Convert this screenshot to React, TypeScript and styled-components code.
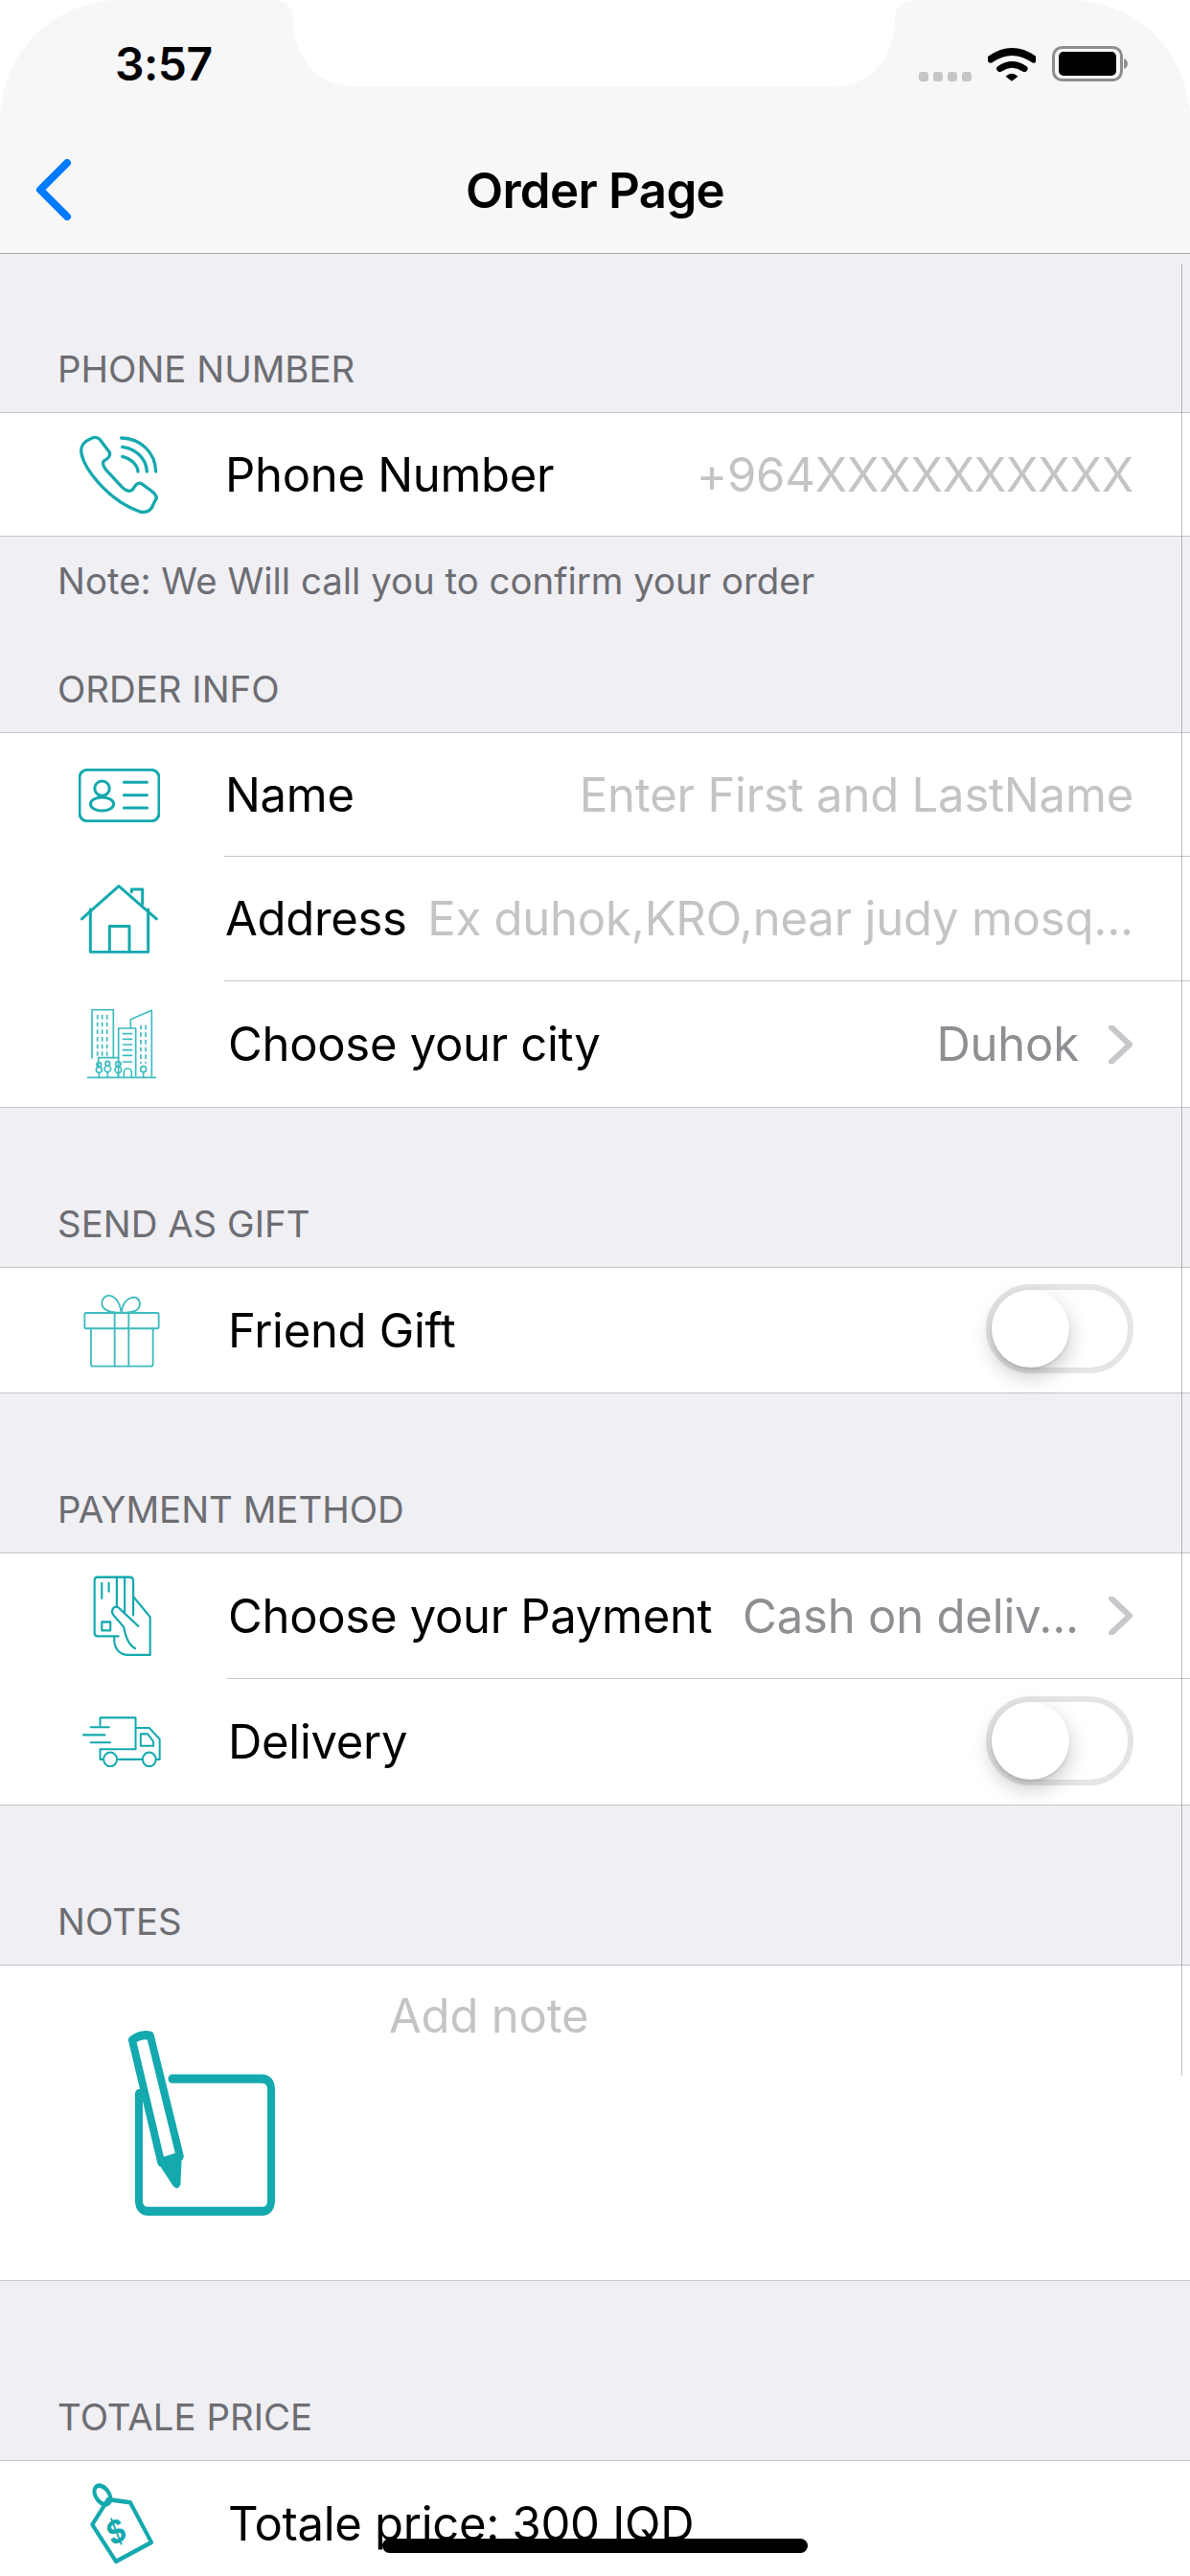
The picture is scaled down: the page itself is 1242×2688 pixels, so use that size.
import React from 'react'
import styled, { createGlobalStyle } from 'styled-components'

const TEAL = '#14a9ae'
const TEAL_LIGHT = '#3dbbbf'

const GlobalStyle = createGlobalStyle`
  html, body {
    margin: 0;
    padding: 0;
    background: #fff;
    font-family: Inter, "Noto Sans", "Liberation Sans", sans-serif;
  }
`

const Screen = styled.div`
  position: relative;
  width: 1242px;
  height: 2688px;
  overflow: hidden;
  background: #fff;
  display: flex;
  flex-direction: column;
`

const Nav = styled.header`
  position: relative;
  height: 265px;
  flex-shrink: 0;
  box-sizing: border-box;
  background: #f7f7f8;
  border-bottom: 1px solid #a9a9ab;
  border-radius: 125px 125px 0 0;
`

const NotchShape = styled.svg`
  position: absolute;
  left: 280px;
  top: 0;
`

const StatusBar = styled.div`
  height: 132px;
  box-sizing: border-box;
  padding: 49px 65px 0 120px;
  display: flex;
  justify-content: space-between;
  align-items: flex-start;
`

const Time = styled.span`
  font-size: 48px;
  line-height: 36px;
  font-weight: 600;
  color: #000;
  letter-spacing: -0.5px;
`

const StatusIcons = styled.div`
  display: flex;
  align-items: flex-end;
  height: 36px;
`

const SignalDots = styled.div`
  display: flex;
  gap: 5px;
  margin-right: 17px;
`

const SignalDot = styled.i`
  display: block;
  width: 10px;
  height: 10px;
  border-radius: 3px;
  background: #c6c6c6;
`

const TitleBar = styled.div`
  height: 132px;
  display: grid;
  grid-template-columns: 1fr auto 1fr;
  align-items: center;
`

const BackButton = styled.div`
  margin-left: 36px;
`

const Title = styled.h1`
  margin: 0;
  font-size: 51px;
  font-weight: 600;
  color: #000;
  letter-spacing: -0.7px;
`

const Content = styled.main`
  flex: 1;
  background: #efeff4;
`

const SectionHeader = styled.div<{ $height: number }>`
  height: ${p => p.$height}px;
  box-sizing: border-box;
  padding: 0 0 21px 60px;
  display: flex;
  align-items: flex-end;
  font-size: 38.4px;
  line-height: 47px;
  color: #6d6d72;
`

const SectionNote = styled.div`
  height: 92px;
  box-sizing: border-box;
  padding-left: 60px;
  display: flex;
  align-items: center;
  font-size: 38.4px;
  color: #6d6d72;
`

const Group = styled.section`
  background: #fff;
  border-top: 1px solid #c6c6c8;
  border-bottom: 1px solid #c6c6c8;
`

const Row = styled.div<{ $height: number; $inset: number }>`
  height: ${p => p.$height}px;
  display: grid;
  grid-template-columns: ${p => p.$inset}px 1fr;
  --icon-pad: ${p => p.$inset - 220}px;
`

const IconCell = styled.div`
  padding-left: var(--icon-pad);
  display: flex;
  align-items: center;
  justify-content: center;
`

const RowBody = styled.div<{ $divider?: boolean }>`
  min-width: 0;
  box-sizing: border-box;
  padding: 0 59px 0 1px;
  display: flex;
  align-items: center;
  justify-content: space-between;
  border-bottom: ${p => (p.$divider ? '1px solid #c6c6c8' : 'none')};
`

const RowLabel = styled.span`
  font-size: 49px;
  color: #000;
  white-space: nowrap;
  letter-spacing: -0.3px;
`

const Placeholder = styled.span`
  font-size: 49px;
  color: #c4c4c6;
  white-space: nowrap;
  letter-spacing: -0.2px;
`

const ValueWrap = styled.span`
  display: flex;
  align-items: center;
  gap: 31px;
`

const Value = styled.span`
  font-size: 49px;
  color: #8e8e93;
  white-space: nowrap;
  letter-spacing: -0.2px;
`

const ToggleTrack = styled.div`
  width: 154px;
  height: 93px;
  box-sizing: border-box;
  margin-bottom: 3px;
  border: 6px solid #e5e5e5;
  border-radius: 47px;
  background: #fff;
`

const ToggleKnob = styled.div`
  width: 81px;
  height: 81px;
  border-radius: 50%;
  background: #fff;
  box-shadow: 0 9px 22px rgba(0, 0, 0, 0.22), 0 2px 3px rgba(0, 0, 0, 0.1);
`

const NotesRow = styled.div`
  height: 328px;
  display: grid;
  grid-template-columns: 406px 1fr;
`

const NotesIconCell = styled.div`
  padding-left: 133px;
  display: flex;
  align-items: center;
`

const NotesField = styled.div`
  padding-top: 23px;
  line-height: 60px;
`

const ScrollIndicator = styled.div`
  position: absolute;
  left: 1233px;
  top: 275px;
  width: 1px;
  height: 1891px;
  background: rgba(60, 60, 67, 0.32);
`

const HomeBar = styled.div`
  position: absolute;
  left: 399px;
  top: 2649px;
  width: 444px;
  height: 15px;
  border-radius: 8px;
  background: #000;
`

const Line = styled.svg.attrs({ fill: 'none', strokeLinecap: 'round', strokeLinejoin: 'round', preserveAspectRatio: 'none' })`
  display: block;
`

const WifiGlyph = styled(Line)`
  margin-right: 17px;
`

const SoftLine = styled(Line)`
  filter: blur(0.7px);
`

const Back = () => (
  <Line width={40} height={64} viewBox="0 0 40 64" stroke="#007aff" strokeWidth={8}>
    <path d="M34 4 L6 32 L34 60" />
  </Line>
)

const Chevron = () => (
  <Line width={26} height={40} viewBox="0 0 26 40" stroke="#c7c7cc" strokeWidth={6} strokeLinecap="butt" strokeLinejoin="miter">
    <path d="M3 2 L22 20 L3 38" />
  </Line>
)

const Wifi = () => (
  <WifiGlyph width={50} height={36} viewBox="305 148 148 108" stroke="#000" strokeLinecap="butt">
    <path d="M314 186 Q380 140 446 186" strokeWidth={23} />
    <path d="M342 216 Q380 190 418 216" strokeWidth={20} />
    <path d="M360 240 Q379 222 398 240 L379 255 Z" fill="#000" stroke="none" />
  </WifiGlyph>
)

const Battery = () => (
  <Line width={79} height={37} viewBox="0 0 79 37">
    <rect x={1.5} y={1.5} width={71} height={34} rx={9} stroke="#8e8e8e" strokeWidth={3} />
    <rect x={7} y={6} width={60} height={25} rx={5} fill="#000" />
    <path d="M75 13 Q79 15 79 18.5 Q79 22 75 24 Z" fill="#8e8e8e" />
  </Line>
)

const PhoneIcon = () => (
  <Line width={86} height={86} viewBox="125 92 258 258" stroke={TEAL} strokeWidth={10}>
    <path d="M165 110 C145 118 133 135 137 155 C145 200 215 300 320 338 C340 342 355 335 362 315 L372 295 C372 285 365 280 355 272 L325 250 C315 245 305 255 298 268 C290 277 275 272 265 262 L215 208 C205 195 200 185 208 178 C220 172 228 162 225 152 L195 112 C185 102 175 104 165 110 Z" />
    <path d="M262 107 C320 108 368 150 370 212" />
    <path d="M265 135 C305 140 340 170 342 212" />
    <path d="M265 165 C290 170 312 190 314 212" />
  </Line>
)

const CardIcon = () => (
  <Line width={85} height={56} viewBox="127 62 253 168" stroke={TEAL} strokeWidth={9}>
    <rect x={130} y={66} width={247} height={160} rx={24} />
    <circle cx={200} cy={124} r={23} />
    <ellipse cx={200} cy={173} rx={36} ry={21} />
    <path d="M268 105 H340 M268 145 H340 M268 185 H340" />
  </Line>
)

const HouseIcon = () => (
  <Line width={81} height={72} viewBox="132 426 243 219" stroke={TEAL} strokeWidth={9}>
    <path d="M136 535 L252 431 L370 535" />
    <path d="M163 505 V640 H344 V505" />
    <path d="M223 640 V558 H285 V640" />
    <path d="M292 450 V441 H326 V488" />
  </Line>
)

const CityIcon = () => (
  <Line width={72} height={73} viewBox="150 820 216 219" stroke={TEAL_LIGHT} strokeWidth={5}>
    <path d="M165 972 V822 H232 V972" />
    <path d="M248 1030 V880 H302 V1030" />
    <path d="M286 880 V852 L352 824 V1030" />
    <path d="M150 1034 H365" />
    <path d="M185 1000 V972 H248" />
    <path d="M182 838 V966 M197 838 V966 M212 838 V966" strokeDasharray="14 9" strokeLinecap="butt" />
    <path d="M318 870 V990 M333 870 V990" strokeDasharray="14 9" strokeLinecap="butt" />
    <path d="M262 897 H290 M262 914 H290 M262 931 H290 M262 948 H290 M262 965 H290 M262 985 H290" />
    <circle cx={187} cy={1010} r={9} />
    <circle cx={187} cy={994} r={7} />
    <circle cx={214} cy={1007} r={10} />
    <circle cx={214} cy={990} r={7} />
    <circle cx={247} cy={1010} r={10} />
    <circle cx={247} cy={992} r={8} />
    <circle cx={326} cy={1008} r={9} />
    <path d="M187 1020 V1034 M214 1018 V1034 M247 1020 V1034 M326 1018 V1034" />
    <path d="M265 1032 V1018 A12 12 0 0 1 289 1018 V1032" />
  </Line>
)

const GiftIcon = () => (
  <Line width={80} height={78} viewBox="138 78 240 222" stroke={TEAL_LIGHT} strokeWidth={5.5}>
    <rect x={142} y={138} width={232} height={46} rx={5} />
    <path d="M162 184 V290 Q162 296 168 296 H350 Q356 296 356 290 V184" />
    <path d="M236 138 V296 M280 138 V296" />
    <path d="M257 136 C215 140 195 125 196 108 C198 78 245 72 257 136 Z" />
    <path d="M257 136 C265 85 312 80 315 110 C315 128 300 140 257 136 Z" />
  </Line>
)

const PaymentIcon = () => (
  <Line width={61} height={85} viewBox="165 903 184 240" stroke={TEAL} strokeWidth={6.5}>
    <path d="M245 1082 H180 Q170 1082 170 1072 V918 Q170 908 180 908 H280 Q292 908 292 920 V1020" />
    <path d="M240 908 V995 M265 908 V1010" />
    <path d="M193 925 V970 M215 925 V950" />
    <rect x={193} y={1040} width={27} height={25} />
    <path d="M292 965 L345 1025 V1137 H275 C250 1137 232 1120 232 1090 V1082" />
    <path d="M308 1052 L245 997 C228 990 220 1008 230 1020 L262 1055 C268 1085 280 1110 298 1118" />
  </Line>
)

const TruckIcon = () => (
  <Line width={82} height={53} viewBox="134 1318 248 150" stroke={TEAL} strokeWidth={6}>
    <path d="M190 1345 V1322 H302 V1415 H190 V1445 H200" />
    <path d="M246 1445 H322 M368 1445 H378 V1385 L345 1352 H302" />
    <circle cx={222} cy={1445} r={21} />
    <circle cx={345} cy={1445} r={21} />
    <path d="M318 1370 H340 L358 1392 V1405 H318 Z" />
    <path d="M160 1350 H218 M137 1373 H205 M160 1395 H222" />
  </Line>
)

const NoteIcon = () => (
  <SoftLine width={154} height={194} viewBox="278 90 464 500" stroke={TEAL} strokeWidth={24}>
    <path d="M418 222 H700 Q730 222 730 252 V548 Q730 578 700 578 H344 Q314 578 314 548 V262" />
    <path d="M293 118 Q320 100 350 106 L443 430 L384 446 Z" />
    <path d="M378 448 L446 428 L442 505 Q436 520 424 508 Z" fill={TEAL} strokeWidth={6} />
  </SoftLine>
)

const TagIcon = () => (
  <Line width={66} height={86} viewBox="158 1315 200 223" stroke={TEAL} strokeWidth={12}>
    <path d="M215 1362 L285 1370 L352 1478 L240 1530 L165 1430 Z" />
    <ellipse cx={197} cy={1350} rx={30} ry={20} transform="rotate(45 197 1350)" />
    <text x={0} y={0} fill={TEAL} stroke="none" fontSize={86} fontWeight={700} fontFamily="Inter, sans-serif" textAnchor="middle" transform="translate(253 1477) rotate(-25)">$</text>
  </Line>
)

const Toggle = () => (
  <ToggleTrack>
    <ToggleKnob />
  </ToggleTrack>
)

export default function App() {
  return (
    <Screen>
      <GlobalStyle />
      <Nav>
        <StatusBar>
          <Time>3:57</Time>
          <StatusIcons>
            <SignalDots>
              <SignalDot />
              <SignalDot />
              <SignalDot />
              <SignalDot />
            </SignalDots>
            <Wifi />
            <Battery />
          </StatusIcons>
        </StatusBar>
        <TitleBar>
          <BackButton><Back /></BackButton>
          <Title>Order Page</Title>
        </TitleBar>
        <NotchShape width={680} height={91} viewBox="280 0 680 91">
          <path d="M284 0 C300 0 306 8 306 24 C308 60 330 89 368 90 H872 C910 89 932 60 934 24 C934 8 940 0 956 0 Z" fill="#fff" />
        </NotchShape>
      </Nav>
      <Content>
        <SectionHeader $height={165}>PHONE NUMBER</SectionHeader>
        <Group>
          <Row $height={128} $inset={234}>
            <IconCell><PhoneIcon /></IconCell>
            <RowBody>
              <RowLabel>Phone Number</RowLabel>
              <Placeholder>+964XXXXXXXXXX</Placeholder>
            </RowBody>
          </Row>
        </Group>
        <SectionNote>Note: We Will call you to confirm your order</SectionNote>
        <SectionHeader $height={112}>ORDER INFO</SectionHeader>
        <Group>
          <Row $height={129} $inset={234}>
            <IconCell><CardIcon /></IconCell>
            <RowBody $divider>
              <RowLabel>Name</RowLabel>
              <Placeholder>Enter First and LastName</Placeholder>
            </RowBody>
          </Row>
          <Row $height={130} $inset={234}>
            <IconCell><HouseIcon /></IconCell>
            <RowBody $divider>
              <RowLabel>Address</RowLabel>
              <Placeholder>Ex duhok,KRO,near judy mosq...</Placeholder>
            </RowBody>
          </Row>
          <Row $height={131} $inset={237}>
            <IconCell><CityIcon /></IconCell>
            <RowBody>
              <RowLabel>Choose your city</RowLabel>
              <ValueWrap>
                <Value>Duhok</Value>
                <Chevron />
              </ValueWrap>
            </RowBody>
          </Row>
        </Group>
        <SectionHeader $height={166}>SEND AS GIFT</SectionHeader>
        <Group>
          <Row $height={130} $inset={237}>
            <IconCell><GiftIcon /></IconCell>
            <RowBody>
              <RowLabel>Friend Gift</RowLabel>
              <Toggle />
            </RowBody>
          </Row>
        </Group>
        <SectionHeader $height={166}>PAYMENT METHOD</SectionHeader>
        <Group>
          <Row $height={131} $inset={237}>
            <IconCell><PaymentIcon /></IconCell>
            <RowBody $divider>
              <RowLabel>Choose your Payment</RowLabel>
              <ValueWrap>
                <Value>Cash on deliv...</Value>
                <Chevron />
              </ValueWrap>
            </RowBody>
          </Row>
          <Row $height={131} $inset={237}>
            <IconCell><TruckIcon /></IconCell>
            <RowBody>
              <RowLabel>Delivery</RowLabel>
              <Toggle />
            </RowBody>
          </Row>
        </Group>
        <SectionHeader $height={166}>NOTES</SectionHeader>
        <Group>
          <NotesRow>
            <NotesIconCell><NoteIcon /></NotesIconCell>
            <NotesField><Placeholder>Add note</Placeholder></NotesField>
          </NotesRow>
        </Group>
        <SectionHeader $height={187}>TOTALE PRICE</SectionHeader>
        <Group>
          <Row $height={130} $inset={237}>
            <IconCell><TagIcon /></IconCell>
            <RowBody>
              <RowLabel>Totale price: 300 IQD</RowLabel>
            </RowBody>
          </Row>
        </Group>
      </Content>
      <ScrollIndicator />
      <HomeBar />
    </Screen>
  )
}
